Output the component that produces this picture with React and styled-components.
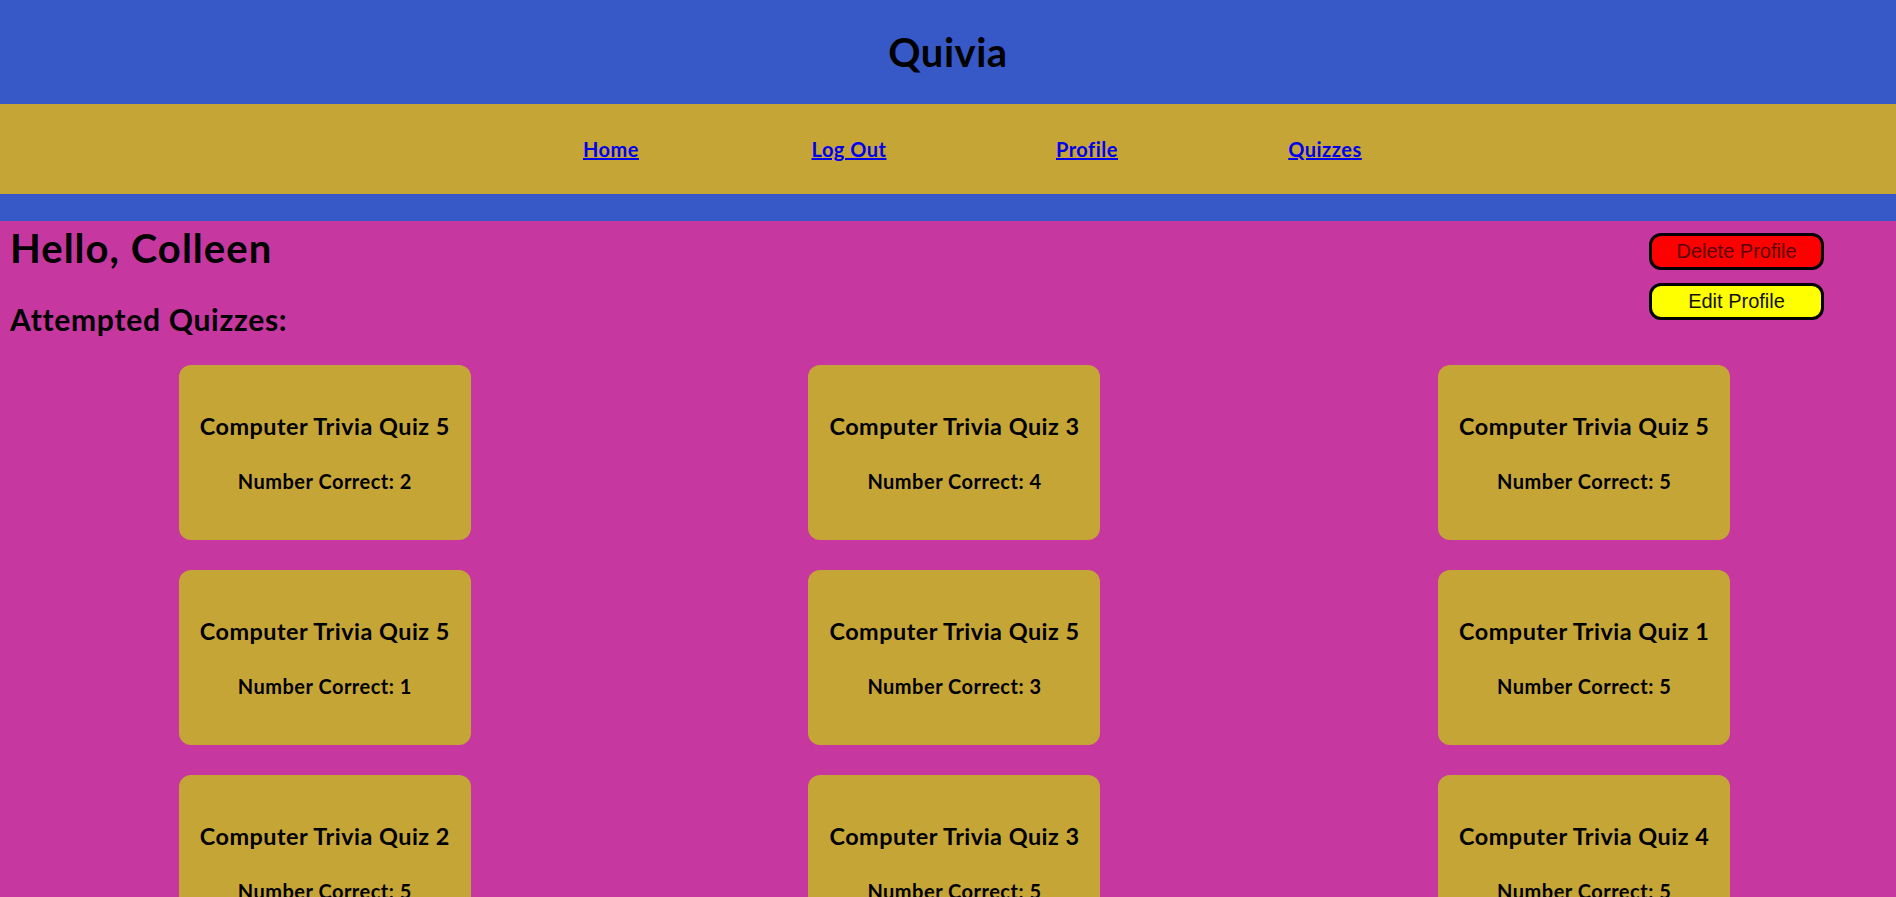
import React from 'react';
import styled, { createGlobalStyle } from 'styled-components';

const attempts = [
  { title: 'Computer Trivia Quiz 5', correct: 2 },
  { title: 'Computer Trivia Quiz 3', correct: 4 },
  { title: 'Computer Trivia Quiz 5', correct: 5 },
  { title: 'Computer Trivia Quiz 5', correct: 1 },
  { title: 'Computer Trivia Quiz 5', correct: 3 },
  { title: 'Computer Trivia Quiz 1', correct: 5 },
  { title: 'Computer Trivia Quiz 2', correct: 5 },
  { title: 'Computer Trivia Quiz 3', correct: 5 },
  { title: 'Computer Trivia Quiz 4', correct: 5 },
];

const links = ['Home', 'Log Out', 'Profile', 'Quizzes'];

const App = () => {
  return (
    <>
      <GlobalStyle />
      <Header>
        <Title>Quivia</Title>
      </Header>
      <Nav>
        <NavList>
          {links.map((link) => (
            <NavItem key={link}>
              <NavLink href='#'>{link}</NavLink>
            </NavItem>
          ))}
        </NavList>
      </Nav>
      <Strip />
      <Main>
        <TopRow>
          <div>
            <Greeting>Hello, Colleen</Greeting>
            <SectionTitle>Attempted Quizzes:</SectionTitle>
          </div>
          <Actions>
            <ProfileButton variant='delete'>Delete Profile</ProfileButton>
            <ProfileButton variant='edit'>Edit Profile</ProfileButton>
          </Actions>
        </TopRow>
        <QuizGrid>
          {attempts.map((attempt, index) => (
            <QuizCard key={index}>
              <QuizTitle>{attempt.title}</QuizTitle>
              <QuizScore>Number Correct: {attempt.correct}</QuizScore>
            </QuizCard>
          ))}
        </QuizGrid>
      </Main>
    </>
  );
};

const GlobalStyle = createGlobalStyle`
  html, body {
    margin: 0;
    padding: 0;
    background-color: #C637A0;
    font-family: Lato, "Open Sans", sans-serif;
    font-size: 20px;
    letter-spacing: 0.025em;
    overflow: hidden;
  }
`;

const Header = styled.header`
  height: 104px;
  display: flex;
  align-items: center;
  justify-content: center;
  background-color: #3759C8;
`;

const Title = styled.h1`
  margin: 0;
  font-size: 40px;
  line-height: 48px;
  color: #000;
`;

const Nav = styled.nav`
  height: 90px;
  display: flex;
  align-items: center;
  background-color: #C6A537;
`;

const NavList = styled.ul`
  flex: 1;
  display: flex;
  justify-content: center;
  margin: 0;
  padding: 0 0 0 40px;
  list-style: none;
`;

const NavItem = styled.li`
  width: 238px;
  text-align: center;
`;

const NavLink = styled.a`
  font-size: 20px;
  font-weight: 700;
  color: #0000EE;
  text-decoration: underline;
`;

const Strip = styled.div`
  height: 27px;
  background-color: #3759C8;
`;

const Main = styled.main`
  padding: 3px 0 40px 10px;
`;

const TopRow = styled.div`
  display: flex;
  justify-content: space-between;
  align-items: flex-start;
`;

const Greeting = styled.h1`
  margin: 0;
  font-size: 40px;
  line-height: 48px;
  letter-spacing: 0.026em;
`;

const SectionTitle = styled.h2`
  margin: 29px 0 0;
  font-size: 30px;
  line-height: 36px;
  letter-spacing: 0.024em;
`;

const Actions = styled.div`
  display: flex;
  flex-direction: column;
  gap: 13px;
  padding: 9px 72px 0 0;
`;

const ProfileButton = styled.button`
  width: 175px;
  height: 37px;
  padding: 0;
  border: 3px solid #000;
  border-radius: 12px;
  font-family: "Liberation Sans", Arial, sans-serif;
  font-size: 20px;
  letter-spacing: 0;
  background-color: ${props => props.variant === 'delete' ? '#FF0000' : '#FFFF00'};
  color: ${props => props.variant === 'delete' ? '#5A0000' : '#111'};
  cursor: pointer;
`;

const QuizGrid = styled.div`
  display: grid;
  grid-template-columns: repeat(3, 1fr);
  row-gap: 30px;
  justify-items: center;
  margin: 28px -3px 0 0;
`;

const QuizCard = styled.div`
  width: 292px;
  height: 175px;
  display: flex;
  flex-direction: column;
  align-items: center;
  justify-content: center;
  gap: 29px;
  background-color: #C6A537;
  border-radius: 12px;
`;

const QuizTitle = styled.h3`
  margin: 0;
  font-size: 23.4px;
  line-height: 28px;
`;

const QuizScore = styled.h4`
  margin: 0;
  font-size: 20px;
  line-height: 24px;
`;

export default App;
